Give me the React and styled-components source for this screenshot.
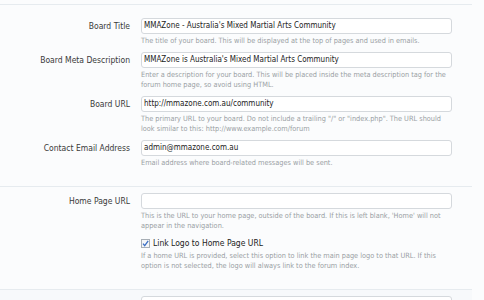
import React from 'react'
import styled, { createGlobalStyle } from 'styled-components'

const GlobalStyle = createGlobalStyle`
  body {
    margin: 0;
    background: #fbfcfd;
    font-family: "DejaVu Sans Condensed", "DejaVu Sans", sans-serif;
    color: #333;
  }
`

const Page = styled.div`
  width: 484px;
  height: 300px;
  overflow: hidden;
  padding-top: 4px;
  box-sizing: border-box;
`

const Fieldset = styled.section`
  width: 472px;
  border-top: 1px solid #e6ebef;
  padding: ${p => p.$pad || '13px 0 18px'};
  background: ${p => p.$shade ? '#f7f9fb' : 'transparent'};
  display: flex;
  flex-direction: column;
  gap: 6px;
`

const Row = styled.div`
  display: grid;
  grid-template-columns: 130px 311px;
  column-gap: 11px;
  align-items: start;
`

const Label = styled.label`
  text-align: right;
  font-size: 8.5px;
  line-height: 16px;
  color: #3a3a3a;
  white-space: nowrap;
`

const Field = styled.div`
  display: flex;
  flex-direction: column;
`

const Input = styled.div`
  height: 16px;
  box-sizing: border-box;
  border: 1px solid #d5d9dd;
  border-radius: 3px;
  background: #fff;
  font-size: 8px;
  line-height: 14px;
  padding: 0 2px;
  color: #222;
  white-space: nowrap;
  overflow: hidden;
`

const Hint = styled.p`
  margin: 2px 0 0;
  font-size: 7.3px;
  line-height: 10px;
  color: #9a9fa4;
`

const CheckRow = styled.div`
  display: flex;
  align-items: center;
  gap: 3px;
  font-size: 8.5px;
  color: #222;
  line-height: 12px;
`

const Box = styled.span`
  width: 7px;
  height: 7px;
  border: 1px solid #a7aeb5;
  background: #f4f6f8;
  display: inline-flex;
  align-items: center;
  justify-content: center;
  box-sizing: content-box;
`

function TextRow({ label, value, hint }) {
  return (
    <Row>
      <Label>{label}</Label>
      <Field>
        <Input>{value}</Input>
        {hint && <Hint>{hint}</Hint>}
      </Field>
    </Row>
  )
}

export default function App() {
  return (
    <Page>
      <GlobalStyle />
      <Fieldset>
        <TextRow
          label="Board Title"
          value="MMAZone - Australia's Mixed Martial Arts Community"
          hint="The title of your board. This will be displayed at the top of pages and used in emails."
        />
        <TextRow
          label="Board Meta Description"
          value="MMAZone is Australia's Mixed Martial Arts Community"
          hint="Enter a description for your board. This will be placed inside the meta description tag for the forum home page, so avoid using HTML."
        />
        <TextRow
          label="Board URL"
          value="http://mmazone.com.au/community"
          hint={'The primary URL to your board. Do not include a trailing "/" or "index.php". The URL should look similar to this: http://www.example.com/forum'}
        />
        <TextRow
          label="Contact Email Address"
          value="admin@mmazone.com.au"
          hint="Email address where board-related messages will be sent."
        />
      </Fieldset>
      <Fieldset $pad="6px 0 18px">
        <TextRow
          label="Home Page URL"
          value=""
          hint="This is the URL to your home page, outside of the board. If this is left blank, 'Home' will not appear in the navigation."
        />
        <Row>
          <span />
          <Field>
            <CheckRow>
              <Box>
                <svg width="7" height="7" viewBox="0 0 7 7">
                  <path d="M1 3.6 L2.7 5.6 L6.2 0.9" fill="none" stroke="#3b6fc4" strokeWidth="1.3" />
                </svg>
              </Box>
              Link Logo to Home Page URL
            </CheckRow>
            <Hint>If a home URL is provided, select this option to link the main page logo to that URL. If this option is not selected, the logo will always link to the forum index.</Hint>
          </Field>
        </Row>
      </Fieldset>
      <Fieldset $pad="6px 0 0" $shade>
        <TextRow label="" value="" />
      </Fieldset>
    </Page>
  )
}
